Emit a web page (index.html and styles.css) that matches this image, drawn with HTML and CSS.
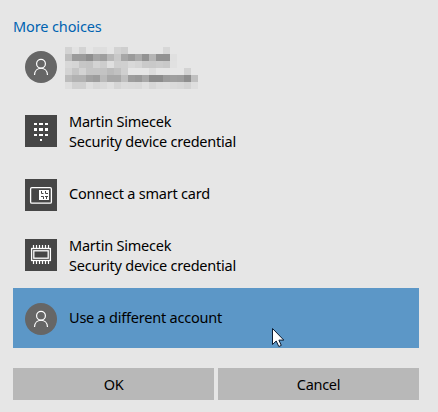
FILE: index.html
```
<!DOCTYPE html>
<html lang="en">
<head>
<meta charset="utf-8">
<title>More choices</title>
<link rel="stylesheet" href="styles.css">
</head>
<body>
<main class="dialog">
  <h1 class="title"><span>More choices</span></h1>
  <ul class="choices">
    <li class="choice">
      <svg class="icon" viewBox="0 0 32 32"><circle cx="16" cy="16" r="16" fill="#666"/><g fill="none" stroke="#fff" stroke-width="1.2"><circle cx="16" cy="12.8" r="4.4"/><path d="M9.5 24C9.8 15 22.2 15 22.5 24"/></g></svg>
      <div class="redacted" id="redacted"></div>
    </li>
    <li class="choice">
      <svg class="icon" viewBox="0 0 32 32" shape-rendering="crispEdges"><path fill="#464646" d="M0 0h32v32H0z"/><path fill="#fff" d="M9 8h3v2H9zM14 8h4v2h-4zM20 8h3v2h-3zM9 13h3v3H9zM14 13h4v3h-4zM20 13h3v3h-3zM9 19h3v2H9zM14 19h4v2h-4zM20 19h3v2h-3zM15 24h2v2h-2z"/></svg>
      <div class="label two-line"><span>Martin Simecek</span><span>Security device credential</span></div>
    </li>
    <li class="choice">
      <svg class="icon" viewBox="0 0 32 32"><path fill="#464646" d="M0 0h32v32H0z"/><rect x="5.6" y="8.6" width="20.8" height="15.6" rx="1.3" fill="none" stroke="#fff" stroke-width="1.3"/><path fill="#fff" d="M14 11h10v10H14z"/><path d="M16.5 12v2.5h2M20.5 12v2.5H23M16 17.5h2.5V20M20 17.5h3M21.5 17v3" fill="none" stroke="#464646"/></svg>
      <div class="label"><span>Connect a smart card</span></div>
    </li>
    <li class="choice chip">
      <svg class="icon" viewBox="0 0 32 32"><path fill="#464646" d="M0 0h32v32H0z"/><path d="M8.5 6v3M11.5 6v3M14.5 6v3M17.5 6v3M20.5 6v3M23.5 6v3M8.5 22v3M11.5 22v3M14.5 22v3M17.5 22v3M20.5 22v3M23.5 22v3" stroke="#fff" stroke-width="1.2"/><rect x="6.6" y="9.5" width="18.8" height="12" fill="none" stroke="#fff" stroke-width="1.3"/><rect x="8.8" y="11.8" width="14.4" height="7.4" fill="none" stroke="#fff" stroke-width="1.3"/></svg>
      <div class="label two-line"><span>Martin Simecek</span><span>Security device credential</span></div>
    </li>
    <li class="choice selected">
      <svg class="icon" viewBox="0 0 32 32"><circle cx="16" cy="16" r="16" fill="#666"/><g fill="none" stroke="#fff" stroke-width="1.2"><circle cx="16" cy="12.8" r="4.4"/><path d="M9.5 24C9.8 15 22.2 15 22.5 24"/></g></svg>
      <div class="label"><span>Use a different account</span></div>
      <svg class="cursor" viewBox="0 0 12 19"><path d="M.5 .5V16.5L4.2 13L6.8 18.5L9.3 17.4L6.9 12.1H11.8Z" fill="#fff" stroke="#0b1b30" stroke-width="1"/></svg>
    </li>
  </ul>
  <div class="actions">
    <button class="button" type="button">OK</button>
    <button class="button" type="button">Cancel</button>
  </div>
</main>
<script src="script.js"></script>
</body>
</html>
```
FILE: styles.css
```
* { box-sizing: border-box; }
body {
  margin: 0;
  background: #e6e6e6;
  color: #000;
  font: 15px/20px "Noto Sans", "Open Sans", sans-serif;
}
.dialog {
  width: 438px;
  height: 412px;
  padding: 16px 19px 12px 13px;
}
.title {
  margin: 0 0 1px;
  height: 20px;
  color: #0063b1;
  font-size: 14.5px;
  font-weight: 400;
  line-height: 20px;
  letter-spacing: -0.12px;
}
.choices { margin: 0; padding: 0; list-style: none; }
.choice {
  display: flex;
  align-items: center;
  gap: 12px;
  height: 60px;
  margin-bottom: 4px;
  padding-left: 12px;
}
.choice:nth-child(3) { margin-bottom: 0; }
.choice.chip { margin-bottom: 3px; }
.choice.selected {
  position: relative;
  margin-bottom: 20px;
  background: #5c97c7;
}
.icon { width: 32px; height: 32px; flex: none; display: block; }
.selected .icon { margin-top: 2px; }
.label {
  display: flex;
  flex-direction: column;
  margin-top: -4px;
  font-size: 14.5px;
  white-space: nowrap;
  letter-spacing: -0.22px;
}
.label.two-line { margin-top: 0; }
.selected .label { margin-top: -2px; }
.redacted {
  display: grid;
  grid-template-columns: repeat(19, 7px);
  grid-auto-rows: 7px;
  margin: 2px 0 0 -4px;
}
.cursor { position: absolute; left: 259px; top: 40px; width: 12px; height: 19px; }
.actions { display: flex; gap: 4px; }
.button {
  width: 201px;
  height: 32px;
  padding: 0 0 1px;
  border: 0;
  background: #b8b8b8;
  color: #000;
  font: 14.5px/20px "Noto Sans", "Open Sans", sans-serif;
  letter-spacing: -0.3px;
}
```
FILE: script.js
```
// Gray levels of the obscured account name, one row of tiles per line.
const rows = [
  "d3 e2 d3 e5 de de e5 d3 ce e6 e6 e6 e6 e6 d7 e6 e6 e6 e6",
  "be 9b 9b 8e a5 9f b8 c9 a7 9b ab 93 b5 92 92 e0 e6 e6 e6",
  "d8 d5 c6 c4 d3 cd df cf d0 d9 d5 ca c9 cc c9 e1 e6 e6 e6",
  "d3 c5 d3 c5 c5 c3 bb c1 cf e6 e6 e6 dd e6 e6 e6 e6 d3 e6",
  "bc b2 b2 a2 9d ba a8 a8 bf 9d 99 a9 8c 8c 9c 9f 9d 8e c0",
  "de d0 d0 df d8 da e0 d5 db da d9 e0 d7 dd de da d8 d3 de"
];
const grid = document.getElementById("redacted");
rows.join(" ").split(" ").forEach(v => {
  const tile = document.createElement("i");
  tile.style.background = "#" + v + v + v;
  grid.appendChild(tile);
});
```
